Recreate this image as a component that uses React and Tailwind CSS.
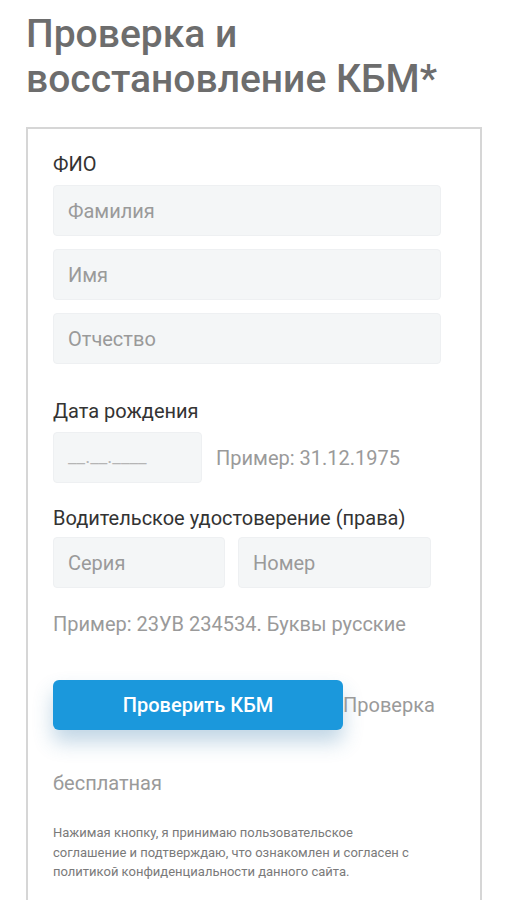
export default function App() {
  const font = { fontFamily: 'Roboto, "Noto Sans", sans-serif' }
  const inputCls =
    'h-[51px] rounded-[4px] border border-[#eef0f2] bg-[#f4f6f7] px-[14px] text-[20px] text-[#9a9a9a] outline-none placeholder:text-[#9a9a9a]'

  return (
    <div className="min-h-[900px] w-[506px] overflow-hidden bg-white" style={font}>
      <h1 className="w-[470px] px-[26px] pt-[12px] text-[39px] leading-[45px] font-medium text-[#6d6d6d]">
        Проверка и восстановление КБМ*
      </h1>

      {/* Форма */}
      <div className="ml-[26px] mt-[25px] h-[800px] w-[456px] border-2 border-[#d6d6d6] px-[25px] pt-[23px]">
        <div className="text-[20px] leading-[24px] text-[#333]">ФИО</div>
        <div className="mt-[9px] flex flex-col gap-[13px] pr-[14px]">
          <input className={inputCls} placeholder="Фамилия" />
          <input className={inputCls} placeholder="Имя" />
          <input className={inputCls} placeholder="Отчество" />
        </div>

        <div className="mt-[35px] text-[20px] leading-[24px] text-[#333]">Дата рождения</div>
        <div className="mt-[9px] flex items-center gap-[14px]">
          <div className="flex h-[51px] w-[149px] items-center rounded-[4px] border border-[#eef0f2] bg-[#f4f6f7] px-[14px] text-[19px] text-[#b5b5b5]">
            __.__.____
          </div>
          <span className="text-[20px] text-[#9a9a9a]">Пример: 31.12.1975</span>
        </div>

        <div className="mt-[23px] text-[20px] leading-[24px] text-[#333]">
          Водительское удостоверение (права)
        </div>
        <div className="mt-[7px] flex gap-[13px]">
          <input className={`${inputCls} w-[172px]`} placeholder="Серия" />
          <input className={`${inputCls} w-[193px]`} placeholder="Номер" />
        </div>
        <div className="mt-[24px] text-[20px] leading-[24px] text-[#9a9a9a]">
          Пример: 23УВ 234534. Буквы русские
        </div>

        <div className="mt-[29px] text-[20px] leading-[76px] text-[#9a9a9a]">
          <button className="inline-block h-[50px] w-[290px] rounded-[6px] bg-[#1b98dc] align-middle text-[20px] leading-[50px] font-medium text-white shadow-[0_12px_20px_rgba(50,120,170,0.3)]">
            Проверить КБМ
          </button>
          <span className="align-middle">Проверка бесплатная</span>
        </div>

        <p className="mt-[3px] text-[13px] leading-[19.5px] text-[#7a7a7a]">
          Нажимая кнопку, я принимаю пользовательское
          <br />
          соглашение и подтверждаю, что ознакомлен и согласен с
          <br />
          политикой конфиденциальности данного сайта.
        </p>
      </div>
    </div>
  )
}
